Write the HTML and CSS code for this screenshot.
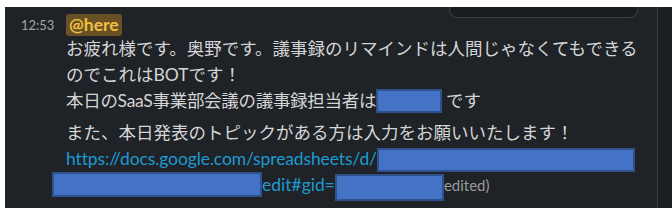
FILE: index.html
```html
<!DOCTYPE html>
<html lang="ja">
<head>
    <meta charset="UTF-8">
    <title>message</title>
    <link rel="stylesheet" href="styles.css">
</head>
<body>
    <div class="panel">
        <div class="main">
            <div class="search-tab"></div>
            <div class="msg">
                <div class="time">12:53</div>
                <div class="body">
                    <div class="head"><span class="mention">@here</span></div>
                    <p class="para">お疲れ様です。奥野です。議事録のリマインドは人間じゃなくてもできるのでこれはBOTです！<br><span class="tight">本日のSaaS事業部会議の議事録担当者は</span><span class="redact r-name"></span><span class="after">です</span></p>
                    <p class="para">また、本日発表のトピックがある方は入力をお願いいたします！<br><a class="link url" href="#">https://docs.google.com/spreadsheets/d/</a><span class="redact r-sheet"></span><br><span class="redact r-id"></span><a class="link" href="#">edit#gid=</a><span class="redact r-gid"></span><span class="edited">edited)</span></p>
                </div>
            </div>
        </div>
        <div class="track"></div>
    </div>
</body>
</html>
```

FILE: styles.css
```css
body {
    margin: 0;
    padding: 0;
    background-color: #ffffff;
    font-family: Lato, "Noto Sans CJK JP", sans-serif;
}
.panel {
    display: flex;
    margin: 7px 0 0 5px;
    height: 201px;
    background-color: #1f2226;
}
.main {
    flex: 1;
    position: relative;
}
.track {
    width: 14px;
    border-left: 1px solid #3a3d41;
    background-color: #1c1f22;
}
.search-tab {
    position: absolute;
    top: 0;
    left: 444px;
    width: 187px;
    height: 10px;
    background-color: #1a1d20;
    border: 1px solid #3b3e42;
    border-top: none;
    border-radius: 0 0 8px 8px;
}
.msg {
    display: flex;
    padding: 7px 0 0 16px;
}
.time {
    width: 45px;
    font-size: 13px;
    line-height: 22px;
    color: #a4a5a7;
}
.body {
    width: 583px;
    color: #d4d5d6;
    font-size: 17.5px;
    line-height: 26px;
}
.head {
    height: 22px;
    line-height: 22px;
}
.mention {
    display: inline-block;
    padding: 0 3px;
    border-radius: 3px;
    background-color: #6a5125;
    color: #f0c040;
    font-weight: bold;
}
.para {
    margin: 0 0 6px 0;
}
.tight {
    letter-spacing: -0.3px;
}
.link {
    color: #1d9bd1;
    text-decoration: none;
}
.url {
    letter-spacing: -0.12px;
}
.redact {
    display: inline-block;
    box-sizing: border-box;
    background-color: #4472c4;
    border: 2px solid #2f528f;
    vertical-align: top;
}
.r-name {
    width: 66px;
    height: 24px;
    margin-top: 1px;
}
.after {
    margin-left: 4px;
}
.r-sheet {
    width: 258px;
    height: 24px;
    margin-top: 2px;
}
.r-id {
    width: 210px;
    height: 25px;
    margin-left: -14px;
}
.r-gid {
    width: 109px;
    height: 27px;
    margin-top: 2px;
}
.edited {
    color: #9a9b9d;
    font-size: 15px;
}
```
